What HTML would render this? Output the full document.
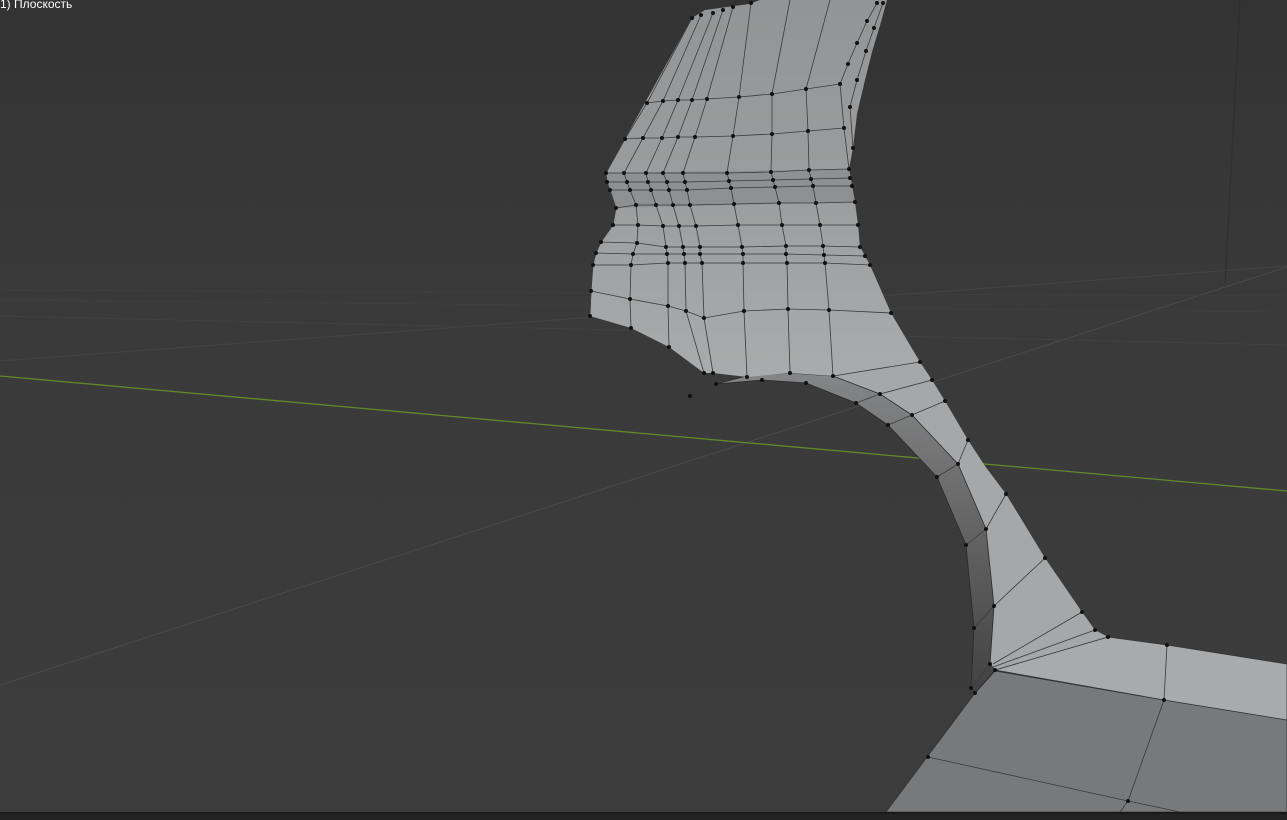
<!DOCTYPE html>
<html><head><meta charset="utf-8"><style>
html,body{margin:0;padding:0;width:1287px;height:820px;overflow:hidden;background:#3a3a3a}
svg{position:absolute;left:0;top:0}
.t{position:absolute;left:0;top:-3px;color:#fff;font:12px "Liberation Sans",sans-serif;}
</style></head><body>
<svg width="1287" height="820" viewBox="0 0 1287 820">
<defs>
<linearGradient id="bg" x1="0" y1="0" x2="0" y2="1"><stop offset="0" stop-color="#333"/><stop offset="0.4" stop-color="#3a3a3a"/><stop offset="1" stop-color="#3c3c3c"/></linearGradient>
<linearGradient id="top" x1="0" y1="0" x2="0" y2="1"><stop offset="0" stop-color="#929495"/><stop offset="0.5" stop-color="#9b9d9e"/><stop offset="1" stop-color="#a9abac"/></linearGradient>
<linearGradient id="arc" x1="0" y1="0" x2="0" y2="1"><stop offset="0" stop-color="#858687"/><stop offset="0.4" stop-color="#6a6a6b"/><stop offset="1" stop-color="#424243"/></linearGradient>
</defs>
<rect width="1287" height="820" fill="url(#bg)"/>
<g stroke="#444" stroke-width="1" fill="none">
<line x1="0" y1="685" x2="1287" y2="267" stroke="#4a4a4a"/>
<line x1="0" y1="361" x2="1287" y2="266"/>
<line x1="0" y1="316" x2="1287" y2="345" stroke="#404040"/>
<line x1="0" y1="300" x2="1287" y2="312" stroke="#3f3f3f"/>
<line x1="0" y1="290" x2="1287" y2="296" stroke="#3e3e3e"/>
<line x1="1240" y1="0" x2="1225" y2="287" stroke="#2e2e2e"/>
</g>
<line x1="0" y1="376" x2="1287" y2="491" stroke="#5e8a2a" stroke-width="1.3"/>
<polygon points="975,693 995,671 1164,700 1287,720 1287,812 886,812" fill="#78797a" stroke="#333" stroke-width="0.8"/>
<polygon points="995,670 1108,637 1167,645 1287,664 1287,720 1164,700" fill="#a8aaab" stroke="#333" stroke-width="0.8"/>
<polygon points="833,376 920,362 932,380 945,401 968,440 985,466 1006,494 1045,558 1082,612 1095,630 1108,637 995,670 990,664 994,606 986,529 958,464 912,415 880,394" fill="#a5a7a8"/>
<polygon points="716,384 747,376 790,373 833,376 880,394 912,415 958,464 986,529 994,606 990,664 995,670 975,693 971,688 974,628 966,545 937,477 888,425 856,403 806,383 762,380" fill="url(#arc)" stroke="#2a2a2a" stroke-width="0.8"/>
<polygon points="692,18 705,10 749,4 760,0 887,0 881,22 872,52 865,80 857,114 853,148 849,169 852,186 855,202 858,225 860,247 865,256 870,265 891,313 920,362 833,376 790,373 747,377 713,373 704,373 669,347 631,328 590,316 593,265 596,253 601,242 613,225 616,208 610,190 607,182 606,173" fill="url(#top)"/>
<polygon points="606,173 849,169 855,202 616,208 610,190" fill="#8e9091"/>
<polygon points="601,242 860,247 870,265 593,265" fill="#9fa1a2"/>
<g stroke="#3a3a3a" stroke-width="0.8" fill="none">
<polyline points="647,103 663,101 678,100 692,100 707,99 739,97 772,94 806,89 840,84"/>
<polyline points="625,139 643,138 662,138 678,137 695,137 733,136 772,134 808,131 844,128"/>
<polyline points="606,173 624,173 646,173 663,173 683,173 727,173 771,172 809,170 849,169"/>
<polyline points="607,182 627,182 648,182 667,182 685,182 729,181 773,180 811,179 850,178"/>
<polyline points="610,190 630,190 651,190 669,190 687,190 731,188 775,187 813,186 852,186"/>
<polyline points="616,208 636,205 656,205 673,205 690,205 734,204 779,203 816,203 855,202"/>
<polyline points="613,225 638,225 663,226 679,226 696,226 738,225 782,225 820,225 858,225"/>
<polyline points="601,242 637,243 666,247 683,247 700,247 742,247 786,246 823,246 860,247"/>
<polyline points="596,253 633,254 667,254 684,254 700,254 743,254 786,254 824,255 865,256"/>
<polyline points="593,265 631,265 668,263 685,263 702,263 743,263 787,263 825,263 870,265"/>
<polyline points="591,291 630,299 668,306 686,311 704,318 744,311 788,309 829,310 891,313"/>
<polyline points="692,18 647,103 625,139 606,173 607,182 610,190 616,208 613,225 601,242 596,253 593,265 591,291 590,316"/>
<polyline points="701,15 663,101 643,138 624,173 627,182 630,190 636,205 638,225 637,243 633,254 631,265 630,299 631,328"/>
<polyline points="713,13 678,100 662,138 646,173 648,182 651,190 656,205 663,226 666,247 667,254 668,263 668,306 669,347"/>
<polyline points="723,10 692,100 678,137 663,173 667,182 669,190 673,205 679,226 683,247 684,254 685,263 686,311 704,373"/>
<polyline points="733,7 707,99 695,137 683,173 685,182 687,190 690,205 696,226 700,247 700,254 702,263 704,318 713,373"/>
<polyline points="751,3 739,97 733,136 727,173 729,181 731,188 734,204 738,225 742,247 743,254 743,263 744,311 747,377"/>
<polyline points="790,0 772,94 772,134 771,172 773,180 775,187 779,203 782,225 786,246 786,254 787,263 788,309 790,373"/>
<polyline points="830,0 806,89 808,131 809,170 811,179 813,186 816,203 820,225 823,246 824,255 825,263 829,310 833,376"/>
<polyline points="877,3 867,21 857,43 848,64 840,84 844,128 849,169"/>
<polyline points="883,3 874,28 866,51 857,80 850,107 853,148"/>
<polyline points="833,376 920,362"/><polyline points="880,394 932,380"/><polyline points="912,415 945,401"/>
<polyline points="958,464 968,440"/><polyline points="986,529 1006,494"/><polyline points="994,606 1045,558"/>
<polyline points="993,664 1082,612"/><polyline points="993,667 1095,630"/><polyline points="995,670 1108,637"/>
<polyline points="856,403 880,394"/><polyline points="888,425 912,415"/><polyline points="937,477 958,464"/>
<polyline points="966,545 986,529"/><polyline points="974,628 994,606"/><polyline points="971,688 990,664"/>
<polyline points="1167,645 1164,700 1128,801 1120,812"/>
<polyline points="928,757 1128,801 1180,812"/>
<polyline points="716,384 690,396 723,386"/>
</g>
<g fill="#111">
<circle cx="647" cy="103" r="2"/><circle cx="663" cy="101" r="2"/><circle cx="678" cy="100" r="2"/><circle cx="692" cy="100" r="2"/><circle cx="707" cy="99" r="2"/><circle cx="739" cy="97" r="2"/><circle cx="772" cy="94" r="2"/><circle cx="806" cy="89" r="2"/><circle cx="840" cy="84" r="2"/>
<circle cx="625" cy="139" r="2"/><circle cx="643" cy="138" r="2"/><circle cx="662" cy="138" r="2"/><circle cx="678" cy="137" r="2"/><circle cx="695" cy="137" r="2"/><circle cx="733" cy="136" r="2"/><circle cx="772" cy="134" r="2"/><circle cx="808" cy="131" r="2"/><circle cx="844" cy="128" r="2"/>
<circle cx="606" cy="173" r="2"/><circle cx="624" cy="173" r="2"/><circle cx="646" cy="173" r="2"/><circle cx="663" cy="173" r="2"/><circle cx="683" cy="173" r="2"/><circle cx="727" cy="173" r="2"/><circle cx="771" cy="172" r="2"/><circle cx="809" cy="170" r="2"/><circle cx="849" cy="169" r="2"/>
<circle cx="607" cy="182" r="2"/><circle cx="627" cy="182" r="2"/><circle cx="648" cy="182" r="2"/><circle cx="667" cy="182" r="2"/><circle cx="685" cy="182" r="2"/><circle cx="729" cy="181" r="2"/><circle cx="773" cy="180" r="2"/><circle cx="811" cy="179" r="2"/><circle cx="850" cy="178" r="2"/>
<circle cx="610" cy="190" r="2"/><circle cx="630" cy="190" r="2"/><circle cx="651" cy="190" r="2"/><circle cx="669" cy="190" r="2"/><circle cx="687" cy="190" r="2"/><circle cx="731" cy="188" r="2"/><circle cx="775" cy="187" r="2"/><circle cx="813" cy="186" r="2"/><circle cx="852" cy="186" r="2"/>
<circle cx="616" cy="208" r="2"/><circle cx="636" cy="205" r="2"/><circle cx="656" cy="205" r="2"/><circle cx="673" cy="205" r="2"/><circle cx="690" cy="205" r="2"/><circle cx="734" cy="204" r="2"/><circle cx="779" cy="203" r="2"/><circle cx="816" cy="203" r="2"/><circle cx="855" cy="202" r="2"/>
<circle cx="613" cy="225" r="2"/><circle cx="638" cy="225" r="2"/><circle cx="663" cy="226" r="2"/><circle cx="679" cy="226" r="2"/><circle cx="696" cy="226" r="2"/><circle cx="738" cy="225" r="2"/><circle cx="782" cy="225" r="2"/><circle cx="820" cy="225" r="2"/><circle cx="858" cy="225" r="2"/>
<circle cx="601" cy="242" r="2"/><circle cx="637" cy="243" r="2"/><circle cx="666" cy="247" r="2"/><circle cx="683" cy="247" r="2"/><circle cx="700" cy="247" r="2"/><circle cx="742" cy="247" r="2"/><circle cx="786" cy="246" r="2"/><circle cx="823" cy="246" r="2"/><circle cx="860" cy="247" r="2"/>
<circle cx="596" cy="253" r="2"/><circle cx="633" cy="254" r="2"/><circle cx="667" cy="254" r="2"/><circle cx="684" cy="254" r="2"/><circle cx="700" cy="254" r="2"/><circle cx="743" cy="254" r="2"/><circle cx="786" cy="254" r="2"/><circle cx="824" cy="255" r="2"/><circle cx="865" cy="256" r="2"/>
<circle cx="593" cy="265" r="2"/><circle cx="631" cy="265" r="2"/><circle cx="668" cy="263" r="2"/><circle cx="685" cy="263" r="2"/><circle cx="702" cy="263" r="2"/><circle cx="743" cy="263" r="2"/><circle cx="787" cy="263" r="2"/><circle cx="825" cy="263" r="2"/><circle cx="870" cy="265" r="2"/>
<circle cx="591" cy="291" r="2"/><circle cx="630" cy="299" r="2"/><circle cx="668" cy="306" r="2"/><circle cx="686" cy="311" r="2"/><circle cx="704" cy="318" r="2"/><circle cx="744" cy="311" r="2"/><circle cx="788" cy="309" r="2"/><circle cx="829" cy="310" r="2"/><circle cx="891" cy="313" r="2"/>
<circle cx="590" cy="316" r="2"/><circle cx="631" cy="328" r="2"/><circle cx="669" cy="347" r="2"/><circle cx="704" cy="373" r="2"/><circle cx="713" cy="373" r="2"/><circle cx="747" cy="377" r="2"/><circle cx="790" cy="373" r="2"/><circle cx="833" cy="376" r="2"/><circle cx="920" cy="362" r="2"/>
<circle cx="692" cy="18" r="2"/><circle cx="701" cy="15" r="2"/><circle cx="713" cy="13" r="2"/><circle cx="723" cy="10" r="2"/><circle cx="733" cy="7" r="2"/><circle cx="751" cy="3" r="2"/>
<circle cx="877" cy="3" r="2"/><circle cx="883" cy="3" r="2"/><circle cx="867" cy="21" r="2"/><circle cx="874" cy="28" r="2"/><circle cx="857" cy="43" r="2"/><circle cx="866" cy="51" r="2"/><circle cx="848" cy="64" r="2"/><circle cx="857" cy="80" r="2"/><circle cx="850" cy="107" r="2"/><circle cx="853" cy="148" r="2"/>
<circle cx="716" cy="384" r="2"/><circle cx="762" cy="380" r="2"/><circle cx="806" cy="383" r="2"/><circle cx="856" cy="403" r="2"/><circle cx="888" cy="425" r="2"/><circle cx="937" cy="477" r="2"/><circle cx="966" cy="545" r="2"/><circle cx="974" cy="628" r="2"/><circle cx="971" cy="688" r="2"/><circle cx="975" cy="693" r="2"/><circle cx="690" cy="396" r="2"/>
<circle cx="880" cy="394" r="2"/><circle cx="912" cy="415" r="2"/><circle cx="958" cy="464" r="2"/><circle cx="986" cy="529" r="2"/><circle cx="994" cy="606" r="2"/><circle cx="990" cy="664" r="2"/><circle cx="995" cy="670" r="2"/>
<circle cx="932" cy="380" r="2"/><circle cx="945" cy="401" r="2"/><circle cx="968" cy="440" r="2"/><circle cx="1006" cy="494" r="2"/><circle cx="1045" cy="558" r="2"/><circle cx="1082" cy="612" r="2"/><circle cx="1095" cy="630" r="2"/><circle cx="1108" cy="637" r="2"/>
<circle cx="1167" cy="645" r="2"/><circle cx="1164" cy="700" r="2"/><circle cx="928" cy="757" r="2"/><circle cx="1128" cy="801" r="2"/>
</g>
<rect x="0" y="812" width="1287" height="8" fill="#232323"/>
<rect x="0" y="812" width="1287" height="2" fill="#1a1a1a"/>
</svg>
<div class="t">1) Плоскость</div>
</body></html>
